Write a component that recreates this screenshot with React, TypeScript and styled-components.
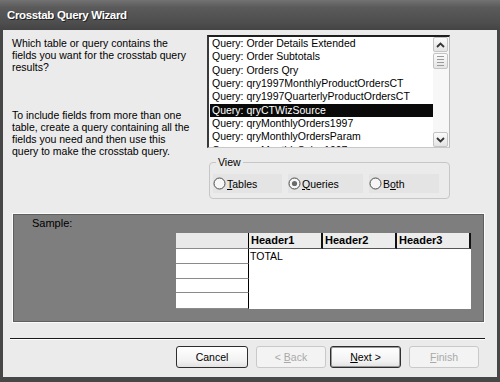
import styled, { createGlobalStyle } from "styled-components";

const GlobalStyle = createGlobalStyle`
  html, body {
    margin: 0;
    padding: 0;
    background: #ffffff;
  }
  body {
    font-family: "Liberation Sans", Arial, sans-serif;
    font-size: 10.5px;
    color: #000;
  }
`;

const Window = styled.div`
  width: 500px;
  height: 382px;
  display: flex;
  flex-direction: column;
  background: #474747;
  overflow: hidden;
`;

const TitleBar = styled.div`
  height: 30px;
  flex: none;
  display: flex;
  align-items: center;
  padding-left: 7px;
  background: linear-gradient(#727272, #5a5a5a 25%, #4e4e4e 75%, #444444);
  color: #fff;
  font-family: "Liberation Sans", Arial, sans-serif;
  font-weight: bold;
  font-size: 11.5px;
  letter-spacing: -0.35px;
  text-shadow: 1px 1px 0 #222;
`;

const Frame = styled.div`
  flex: 1;
  display: flex;
  padding: 0 3px 5px 3px;
`;

const Body = styled.div`
  flex: 1;
  display: flex;
  flex-direction: column;
  background: #ebebeb;
  padding: 5px 9px 0 9px;
`;

const TopRow = styled.div`
  display: flex;
`;

const Intro = styled.div`
  width: 195px;
  padding-top: 2px;
  line-height: 12px;
`;

const Para = styled.p<{ $gap?: number }>`
  margin: 0 0 ${(p) => p.$gap ?? 0}px 0;
`;

const RightCol = styled.div`
  width: 243px;
  display: flex;
  flex-direction: column;
`;

const ListBox = styled.div`
  height: 113px;
  box-sizing: border-box;
  display: flex;
  background: #fff;
  border-top: 2px solid #1e1e1e;
  border-left: 2px solid #3a3a3a;
  border-right: 1px solid #b9b9b9;
  border-bottom: 1px solid #c8c8c8;
`;

const Items = styled.div`
  width: 224px;
  padding-left: 1px;
  box-sizing: border-box;
  overflow: hidden;
`;

const Item = styled.div<{ $selected?: boolean }>`
  height: 13.35px;
  line-height: 13px;
  padding-left: 2px;
  white-space: nowrap;
  background: ${(p) => (p.$selected ? "#0a0a0a" : "transparent")};
  color: ${(p) => (p.$selected ? "#fff" : "#000")};
`;

const ScrollBar = styled.div`
  width: 16px;
  display: flex;
  flex-direction: column;
  background: #f7f7f7;
`;

const ScrollButton = styled.div`
  width: 15px;
  height: 15px;
  box-sizing: border-box;
  border: 1px solid #c4c4c4;
  border-radius: 2px;
  background: linear-gradient(#fbfbfb, #e4e4e4);
  display: flex;
  align-items: center;
  justify-content: center;
`;

const Thumb = styled(ScrollButton)`
  height: 16px;
  margin-top: 1px;
  flex-direction: column;
  gap: 2px;
  span {
    display: block;
    width: 7px;
    height: 1px;
    background: #9a9a9a;
  }
`;

const Track = styled.div`
  flex: 1;
`;

const Group = styled.fieldset`
  margin: 8px 0 0 2px;
  width: 241px;
  box-sizing: border-box;
  border: 1px solid #c6c6c6;
  border-radius: 4px;
  padding: 5px 3px 5px 3px;
  min-width: 0;
`;

const Legend = styled.legend`
  margin-left: 3px;
  padding: 0 2px;
  line-height: 13px;
`;

const RadioRow = styled.div`
  display: flex;
  gap: 6px;
`;

const RadioOption = styled.label<{ $width: number }>`
  width: ${(p) => p.$width}px;
  height: 19px;
  display: flex;
  align-items: center;
  gap: 1px;
  background: #e4e4e4;
`;

const Accel = styled.span`
  text-decoration: underline;
`;

const SamplePanel = styled.div`
  margin-top: 14px;
  width: 473px;
  height: 110px;
  box-sizing: border-box;
  border: 1px solid #fbfbfb;
  box-shadow: inset 0 0 0 1px #5e5e5e;
  background: #7e7e7e;
  display: flex;
  flex-direction: column;
  padding: 3px 0 0 19px;
`;

const SampleLabel = styled.div`
  line-height: 13px;
  font-size: 11px;
`;

const SampleGrid = styled.div`
  align-self: flex-end;
  margin: 3px 13px 0 0;
  display: grid;
  grid-template-columns: 73px 74px 74px 74px;
  grid-template-rows: 16px 15px 15px 14px 16px;
`;

const RowHeadCell = styled.div<{ $head?: boolean }>`
  grid-column: 1;
  background: ${(p) => (p.$head ? "#e9e9e9" : "#fff")};
  border-right: 1px solid #000;
  border-bottom: 1px solid #8a8a8a;
`;

const ColHead = styled.div`
  background: #ececec;
  border-right: 2px solid #111;
  border-bottom: 1px solid #555;
  font-weight: bold;
  font-size: 11px;
  line-height: 15px;
  padding-left: 2px;
`;

const DataArea = styled.div`
  grid-column: 2 / 5;
  grid-row: 2 / 6;
  background: #fff;
  padding: 1px 0 0 1px;
  line-height: 13px;
`;

const Separator = styled.div`
  margin: 15px 3px 0 -2px;
  border-top: 1px solid #1a1a1a;
  border-bottom: 1px solid #fff;
`;

const ButtonRow = styled.div`
  margin: 6px 9px 0 0;
  display: flex;
  justify-content: flex-end;
`;

const Button = styled.button<{ $width: number; $gap?: number; $default?: boolean }>`
  width: ${(p) => p.$width}px;
  height: 22px;
  margin-left: ${(p) => p.$gap ?? 0}px;
  box-sizing: border-box;
  border-radius: 3px;
  font-family: "Liberation Sans", Arial, sans-serif;
  font-size: 10.5px;
  padding: 0;
  color: #000;
  background: linear-gradient(#ffffff, #f2f2f2 70%, #e2e2e2);
  border: 1px solid #2e2e2e;
  box-shadow: ${(p) => (p.$default ? "inset 0 0 0 1px #9a9a9a" : "none")};
  &:disabled {
    color: #a9a9a9;
    border-color: #c9c9c9;
    background: #f3f3f3;
  }
`;

const items = [
  "Query: Order Details Extended",
  "Query: Order Subtotals",
  "Query: Orders Qry",
  "Query: qry1997MonthlyProductOrdersCT",
  "Query: qry1997QuarterlyProductOrdersCT",
  "Query: qryCTWizSource",
  "Query: qryMonthlyOrders1997",
  "Query: qryMonthlyOrdersParam",
  "Query: qryMonthlySales1997",
];

const Chevron = ({ up }: { up?: boolean }) => (
  <svg width="9" height="6" viewBox="0 0 9 6">
    <path
      d={up ? "M1 5 L4.5 1.5 L8 5" : "M1 1 L4.5 4.5 L8 1"}
      fill="none"
      stroke="#333"
      strokeWidth="1.8"
    />
  </svg>
);

const Radio = ({ checked }: { checked?: boolean }) => (
  <svg width="13" height="13" viewBox="0 0 13 13">
    <circle cx="6.5" cy="6.5" r="5.5" fill="#f6f6f6" stroke="#4a4a4a" strokeWidth="1" />
    {checked && <circle cx="6.5" cy="6.5" r="2.6" fill="#6a6a6a" />}
  </svg>
);

const App = () => {
  return (
    <>
      <GlobalStyle />
      <Window>
        <TitleBar>Crosstab Query Wizard</TitleBar>
        <Frame>
          <Body>
            <TopRow>
              <Intro>
                <Para $gap={36}>
                  Which table or query contains the
                  <br />
                  fields you want for the crosstab query
                  <br />
                  results?
                </Para>
                <Para>
                  To include fields from more than one
                  <br />
                  table, create a query containing all the
                  <br />
                  fields you need and then use this
                  <br />
                  query to make the crosstab query.
                </Para>
              </Intro>
              <RightCol>
                <ListBox>
                  <Items>
                    {items.map((it) => (
                      <Item key={it} $selected={it === "Query: qryCTWizSource"}>
                        {it}
                      </Item>
                    ))}
                  </Items>
                  <ScrollBar>
                    <ScrollButton>
                      <Chevron up />
                    </ScrollButton>
                    <Thumb>
                      <span />
                      <span />
                      <span />
                      <span />
                    </Thumb>
                    <Track />
                    <ScrollButton>
                      <Chevron />
                    </ScrollButton>
                  </ScrollBar>
                </ListBox>
                <Group>
                  <Legend>View</Legend>
                  <RadioRow>
                    <RadioOption $width={69}>
                      <Radio />
                      <span>
                        <Accel>T</Accel>ables
                      </span>
                    </RadioOption>
                    <RadioOption $width={75}>
                      <Radio checked />
                      <span>
                        <Accel>Q</Accel>ueries
                      </span>
                    </RadioOption>
                    <RadioOption $width={70}>
                      <Radio />
                      <span>
                        B<Accel>o</Accel>th
                      </span>
                    </RadioOption>
                  </RadioRow>
                </Group>
              </RightCol>
            </TopRow>

            <SamplePanel>
              <SampleLabel>Sample:</SampleLabel>
              <SampleGrid>
                <RowHeadCell $head style={{ gridRow: 1 }} />
                <ColHead>Header1</ColHead>
                <ColHead>Header2</ColHead>
                <ColHead>Header3</ColHead>
                <RowHeadCell style={{ gridRow: 2 }} />
                <RowHeadCell style={{ gridRow: 3 }} />
                <RowHeadCell style={{ gridRow: 4 }} />
                <RowHeadCell style={{ gridRow: 5 }} />
                <DataArea>TOTAL</DataArea>
              </SampleGrid>
            </SamplePanel>

            <Separator />

            <ButtonRow>
              <Button $width={72}>Cancel</Button>
              <Button $width={70} $gap={8} disabled>
                &lt; <Accel>B</Accel>ack
              </Button>
              <Button $width={71} $gap={4} $default>
                <Accel>N</Accel>ext &gt;
              </Button>
              <Button $width={70} $gap={8} disabled>
                <Accel>F</Accel>inish
              </Button>
            </ButtonRow>
          </Body>
        </Frame>
      </Window>
    </>
  );
};

export default App;
